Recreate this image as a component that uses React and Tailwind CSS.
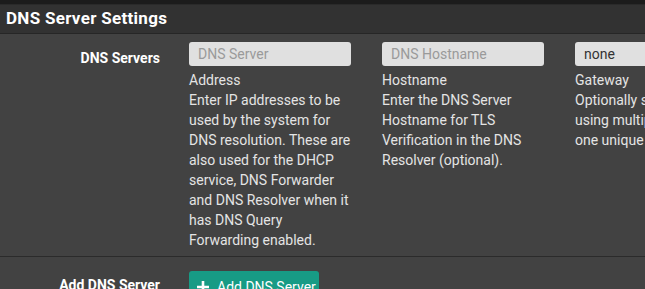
import React from "react";

const Field = ({ placeholder, title, children, width = "w-[162px]", dark }) => (
  <div className={`${width} shrink-0`}>
    <div
      className={`h-[24px] w-[162px] rounded-[3px] bg-[#e0e0e0] px-[9px] text-[14px] leading-[24px] ${
        dark ? "text-[#333]" : "text-[#9a9a9a]"
      }`}
    >
      {placeholder}
    </div>
    <div className="mt-[4px] text-[14px] leading-[20px] text-[#e4e4e4]">
      <div>{title}</div>
      {children}
    </div>
  </div>
);

export default function App() {
  return (
    <div className="w-[645px] h-[289px] overflow-hidden bg-[#424242] font-['Roboto',sans-serif]">
      <div className="h-[5px] bg-[#1c1c1c] border-b border-[#2a2a2a]" />
      <div className="h-[29px] bg-[#323232] border-b border-[#262626] px-[6px] flex items-center">
        <h2 className="text-[17px] font-bold text-white tracking-[0.3px]">
          DNS Server Settings
        </h2>
      </div>

      <div className="flex border-b border-[#2b2b2b] pt-[8px] pb-[6px]">
        <div className="w-[160px] shrink-0 text-right pt-[6px] text-[14px] font-bold text-white">
          DNS Servers
        </div>
        <div className="flex gap-[31px] pl-[29px]">
          <Field placeholder="DNS Server" title="Address">
            <div>
              Enter IP addresses to be used by the system for DNS resolution. These are also used for the DHCP service, DNS Forwarder and DNS Resolver when it has DNS Query Forwarding enabled.
            </div>
          </Field>
          <Field placeholder="DNS Hostname" title="Hostname">
            <div>
              Enter the DNS Server Hostname for TLS Verification in the DNS Resolver (optional).
            </div>
          </Field>
          <Field placeholder="none" title="Gateway" width="w-[400px]" dark>
            <div className="whitespace-nowrap">
              <div>Optionally select the gateway for each DNS server. When</div>
              <div>using multiple WAN connections there should be at least</div>
              <div>one unique DNS server per gateway.</div>
            </div>
          </Field>
        </div>
      </div>

      <div className="flex pt-[14px]">
        <div className="w-[160px] shrink-0 text-right pt-[4px] text-[14px] font-bold text-white">
          Add DNS Server
        </div>
        <div className="pl-[29px]">
          <button className="flex items-center gap-[7px] h-[32px] w-[130px] rounded-[3px] bg-[#179b85] px-[7px] text-[14px] text-white whitespace-nowrap">
            <svg width="14" height="14" viewBox="0 0 14 14" className="shrink-0">
              <path d="M7 1v12M1 7h12" stroke="white" strokeWidth="2.6" />
            </svg>
            Add DNS Server
          </button>
        </div>
      </div>
    </div>
  );
}
